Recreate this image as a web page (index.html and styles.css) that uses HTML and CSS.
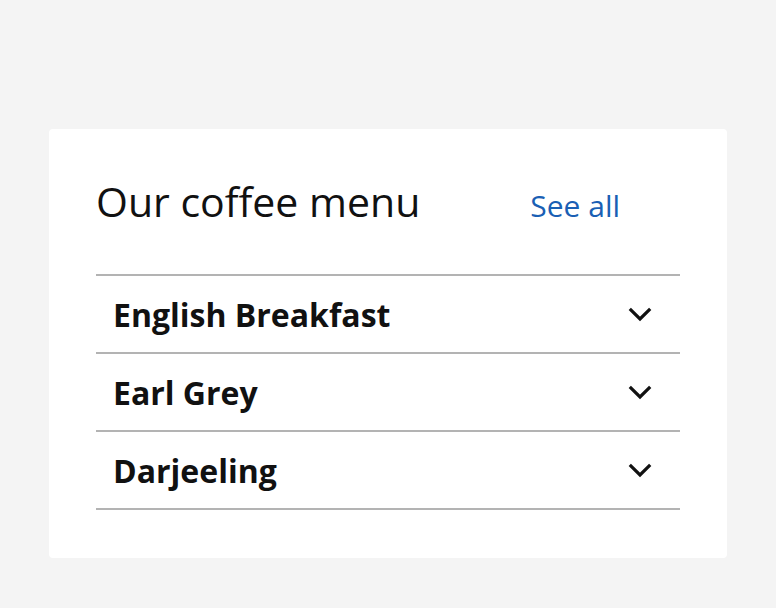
FILE: index.html
```html
<!DOCTYPE html>
<html lang="en">
<head>
<meta charset="utf-8">
<title>Our coffee menu</title>
<link rel="stylesheet" href="styles.css">
</head>
<body>
<section class="card">
  <header class="card-head">
    <h2 class="title">Our coffee menu</h2>
    <a class="see-all" href="#">See all</a>
  </header>
  <ul class="menu">
    <li class="item"><span class="name">English Breakfast</span><svg class="chev" viewBox="0 0 24 15" width="24" height="15"><path d="M1.8 1.8L12 12 22.2 1.8" fill="none" stroke="#111" stroke-width="3.2"/></svg></li>
    <li class="item"><span class="name">Earl Grey</span><svg class="chev" viewBox="0 0 24 15" width="24" height="15"><path d="M1.8 1.8L12 12 22.2 1.8" fill="none" stroke="#111" stroke-width="3.2"/></svg></li>
    <li class="item"><span class="name">Darjeeling</span><svg class="chev" viewBox="0 0 24 15" width="24" height="15"><path d="M1.8 1.8L12 12 22.2 1.8" fill="none" stroke="#111" stroke-width="3.2"/></svg></li>
  </ul>
</section>
</body>
</html>
```
FILE: styles.css
```css
html, body {
  margin: 0;
  padding: 0;
  background: #f4f4f4;
  font-family: "Open Sans", "Noto Sans", sans-serif;
  color: #111;
}
body {
  padding: 129px 49px 0 49px;
}
.card {
  width: 678px;
  height: 429px;
  box-sizing: border-box;
  background: #fff;
  border-radius: 4px;
  padding: 0 47px;
}
.card-head {
  display: flex;
  align-items: baseline;
  padding-top: 46px;
  height: 145px;
  box-sizing: border-box;
}
.title {
  margin: 0;
  font-size: 41px;
  font-weight: 400;
  line-height: 52px;
  letter-spacing: 0;
}
.see-all {
  margin-left: 110px;
  font-size: 30px;
  color: #1a5fb4;
  text-decoration: none;
}
.menu {
  list-style: none;
  margin: 0;
  padding: 0;
  border-top: 2px solid #b3b3b3;
}
.item {
  display: flex;
  align-items: center;
  justify-content: space-between;
  height: 76px;
  border-bottom: 2px solid #b3b3b3;
  padding: 0 28px 0 17px;
}
.name {
  font-size: 32px;
  font-weight: 700;
}
.chev {
  display: block;
}
```
